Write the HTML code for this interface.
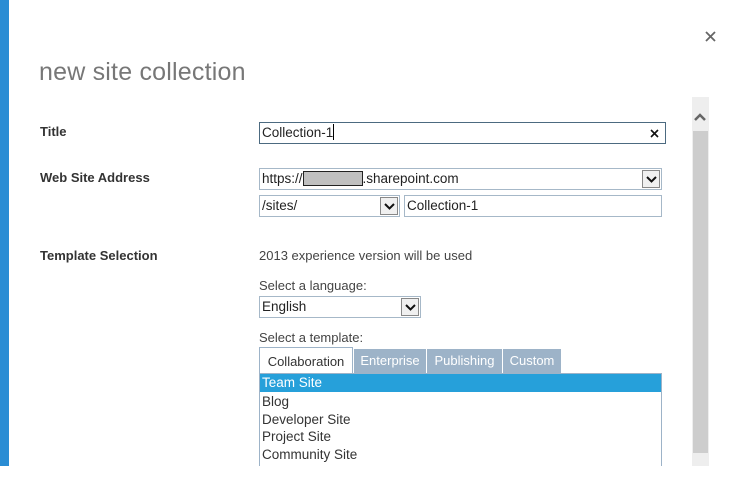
<!DOCTYPE html>
<html><head><style>
*{margin:0;padding:0;box-sizing:border-box}
body{width:748px;height:493px;background:#fff;position:relative;overflow:hidden;font-family:"Liberation Sans",sans-serif;font-size:13px;color:#444}
.a{position:absolute}
.lbl{font-weight:bold;color:#333;font-size:13px}
.box{position:absolute;border:1px solid #a6b8c8;background:#fff;color:#222;padding-left:2px;line-height:20px;font-size:13.5px;white-space:nowrap}
.btn{position:absolute;top:1px;right:1px;width:18px;height:18px;border:1px solid #888;background:#f0f0f0}
.btn svg{position:absolute;left:3px;top:5px}
.tab{position:absolute;top:349px;height:24px;background:#9db3c8;color:#fff;line-height:24px;text-align:center;font-size:13px}
.row{position:absolute;left:1px;height:18px;line-height:18px;padding-left:2px;color:#333;width:401px;font-size:13.5px}
</style></head><body>
<div class="a" style="left:0;top:0;width:9px;height:466px;background:#2a8dd4"></div>
<svg class="a" style="left:705px;top:31px" width="11" height="11"><path d="M1 1L10 10M10 1L1 10" stroke="#666" stroke-width="1.8"/></svg>
<div class="a" style="left:39px;top:58px;font-size:25px;color:#777;letter-spacing:0.2px">new site collection</div>

<div class="a" style="left:692px;top:97px;width:17px;height:369px;background:#eee"></div>
<div class="a" style="left:693px;top:131px;width:15px;height:322px;background:#cdcdcd"></div>
<svg class="a" style="left:694px;top:113px" width="12" height="8"><path d="M1 7L6 2L11 7" stroke="#666" stroke-width="2.5" fill="none"/></svg>

<div class="a lbl" style="left:40px;top:124px">Title</div>
<div class="a lbl" style="left:40px;top:170px">Web Site Address</div>
<div class="a lbl" style="left:40px;top:248px">Template Selection</div>

<div class="box" style="left:259px;top:122px;width:407px;height:22px;border-color:#4c6a80">Collection-1<span style="display:inline-block;width:1px;height:16px;background:#000;vertical-align:-3px"></span>
<svg class="a" style="right:6px;top:6px" width="9" height="9"><path d="M1 1L8 8M8 1L1 8" stroke="#111" stroke-width="1.6"/></svg></div>

<div class="box" style="left:259px;top:168px;width:403px;height:22px">https://<span style="display:inline-block;width:60px;height:15px;background:#c0c0c0;border:1px solid #222;vertical-align:-3px"></span>.sharepoint.com<div class="btn"><svg width="11" height="7"><path d="M1 1L5.5 5.5L10 1" stroke="#111" stroke-width="2" fill="none"/></svg></div></div>
<div class="box" style="left:259px;top:195px;width:141px;height:22px">/sites/<div class="btn"><svg width="11" height="7"><path d="M1 1L5.5 5.5L10 1" stroke="#111" stroke-width="2" fill="none"/></svg></div></div>
<div class="box" style="left:404px;top:195px;width:258px;height:22px">Collection-1</div>

<div class="a" style="left:259px;top:248px">2013 experience version will be used</div>
<div class="a" style="left:259px;top:278px">Select a language:</div>
<div class="box" style="left:259px;top:296px;width:162px;height:22px">English<div class="btn"><svg width="11" height="7"><path d="M1 1L5.5 5.5L10 1" stroke="#111" stroke-width="2" fill="none"/></svg></div></div>
<div class="a" style="left:259px;top:330px">Select a template:</div>

<div class="a" style="left:259px;top:347px;width:94px;height:27px;border:1px solid #9db3c8;border-bottom:none;background:#fff;text-align:center;line-height:27px;color:#333">Collaboration</div>
<div class="tab" style="left:354px;width:72px">Enterprise</div>
<div class="tab" style="left:427px;width:75px">Publishing</div>
<div class="tab" style="left:503px;width:58px">Custom</div>

<div class="a" style="left:259px;top:373px;width:403px;height:100px;border:1px solid #9db3c8;border-bottom:none">
<div class="row" style="top:0;left:0;width:401px;background:#26a0da;color:#fff">Team Site</div>
<div class="row" style="top:19px;left:0">Blog</div>
<div class="row" style="top:37px;left:0">Developer Site</div>
<div class="row" style="top:54px;left:0">Project Site</div>
<div class="row" style="top:72px;left:0">Community Site</div>
</div>
<div class="a" style="left:0;top:466px;width:748px;height:27px;background:#fff"></div>
</body></html>
